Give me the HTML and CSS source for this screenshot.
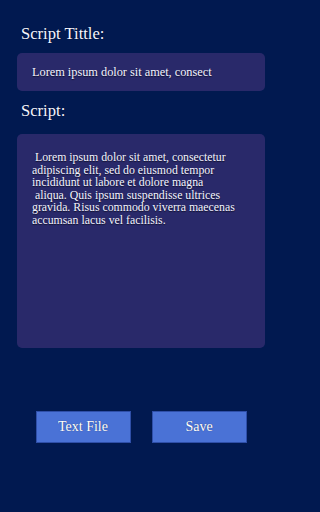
FILE: index.html
```html
<!DOCTYPE html>
<html>
<head>
<meta charset="utf-8">
<link rel="stylesheet" href="styles.css">
</head>
<body>
<div class="page">
  <div class="label label-title">Script Tittle:</div>
  <div class="field field-title">Lorem ipsum dolor sit amet, consect</div>
  <div class="label label-script">Script:</div>
  <div class="field field-script">&nbsp;Lorem ipsum dolor sit amet, consectetur<br>adipiscing elit, sed do eiusmod tempor<br>incididunt ut labore et dolore magna<br>&nbsp;aliqua. Quis ipsum suspendisse ultrices<br>gravida. Risus commodo viverra maecenas<br>accumsan lacus vel facilisis.</div>
  <div class="actions">
    <button class="btn">Text File</button>
    <button class="btn">Save</button>
  </div>
</div>
</body>
</html>
```
FILE: styles.css
```css
html, body {
  margin: 0;
  padding: 0;
  background: #011950;
}
body {
  width: 282px;
  height: 512px;
  overflow: hidden;
  font-family: "Liberation Serif", "DejaVu Serif", serif;
  color: #f4f4ff;
}
.page {
  padding: 0 17px;
}
.label {
  font-size: 16.6px;
  line-height: 20px;
  padding-left: 4px;
  text-shadow: 0 0 1px rgba(0,0,0,0.6);
}
.label-title {
  padding-top: 24px;
}
.field {
  background: #29296a;
  border-radius: 5px;
  text-shadow: 0 1px 1px rgba(0,0,0,0.6);
}
.field-title {
  margin-top: 9px;
  height: 38px;
  box-sizing: border-box;
  padding: 11px 0 0 15px;
  font-size: 12.3px;
  line-height: 16px;
}
.label-script {
  margin-top: 10px;
}
.field-script {
  margin-top: 13px;
  height: 214px;
  box-sizing: border-box;
  padding: 17px 0 0 15px;
  font-size: 11.8px;
  line-height: 12.5px;
}
.actions {
  display: flex;
  justify-content: center;
  gap: 21px;
  margin-top: 63px;
}
.btn {
  width: 95px;
  height: 32px;
  background: #4a72d6;
  border: 1px solid #2f4fa8;
  color: #ffffff;
  font-family: "Liberation Serif", "DejaVu Serif", serif;
  font-size: 14px;
  padding: 0;
  text-shadow: 0 0 1px rgba(0,0,0,0.5);
}
```
